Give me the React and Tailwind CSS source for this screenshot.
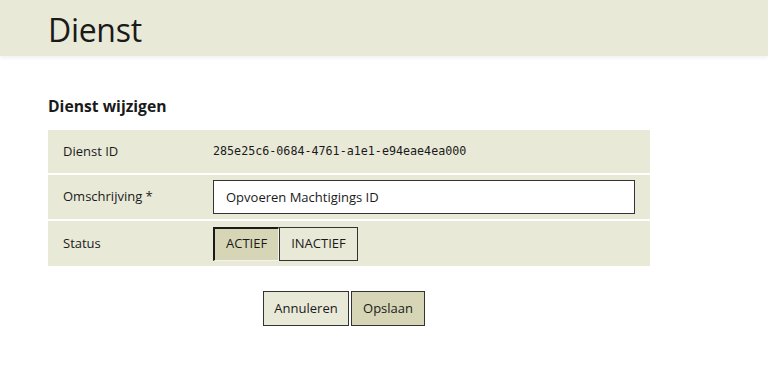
import React, { useState } from 'react';

const rowCls = 'flex items-center bg-[#e9e9d8] px-[15px]';

export default function App() {
  const [status, setStatus] = useState('ACTIEF');
  const [desc, setDesc] = useState('Opvoeren Machtigings ID');

  return (
    <div className="min-h-screen bg-white text-[#1a1a1a] font-['Open_Sans',sans-serif]">
      {/* Header */}
      <div className="h-[56px] bg-[#e9e9d8] shadow-[0_2px_4px_rgba(0,0,0,0.06)] px-[48px] flex items-end">
        <h1 className="text-[32px] leading-none pb-[10px] tracking-[-0.3px]">Dienst</h1>
      </div>

      <div className="px-[48px] pt-[40px]">
        <h2 className="text-[15.7px] font-bold leading-5 mb-[14px]">Dienst wijzigen</h2>

        <div className="w-[602px] flex flex-col gap-[2px] text-[13px]">
          <div className={`${rowCls} h-[43px]`}>
            <div className="w-[150px]">Dienst ID</div>
            <div className="font-['DejaVu_Sans_Mono',monospace] text-[11.7px]">285e25c6-0684-4761-a1e1-e94eae4ea000</div>
          </div>
          <div className={`${rowCls} h-[44px]`}>
            <div className="w-[150px]">Omschrijving *</div>
            <input
              value={desc}
              onChange={(e) => setDesc(e.target.value)}
              className="w-[422px] h-[34px] bg-white border border-[#333] px-[12px] text-[13px] outline-none"
            />
          </div>
          <div className={`${rowCls} h-[45px]`}>
            <div className="w-[150px]">Status</div>
            <div className="flex">
              {['ACTIEF', 'INACTIEF'].map((s) => (
                <button
                  key={s}
                  onClick={() => setStatus(s)}
                  className={
                    status === s
                      ? 'h-[34px] px-[11px] bg-[#d6d6b6] border-t-2 border-l-2 border-[#1a1a1a] border-b border-r border-b-[#f4f4ea] border-r-[#f4f4ea]'
                      : 'h-[34px] px-[11px] bg-[#e9e9d8] border border-[#333]'
                  }
                >
                  {s}
                </button>
              ))}
            </div>
          </div>
        </div>

        <div className="flex gap-[2px] pl-[215px] pt-[25px] text-[13px]">
          <button className="h-[35px] w-[86px] bg-[#e9e9d8] border border-[#333]">Annuleren</button>
          <button className="h-[35px] w-[74px] bg-[#d6d6b6] border border-[#333]">Opslaan</button>
        </div>
      </div>
    </div>
  );
}
